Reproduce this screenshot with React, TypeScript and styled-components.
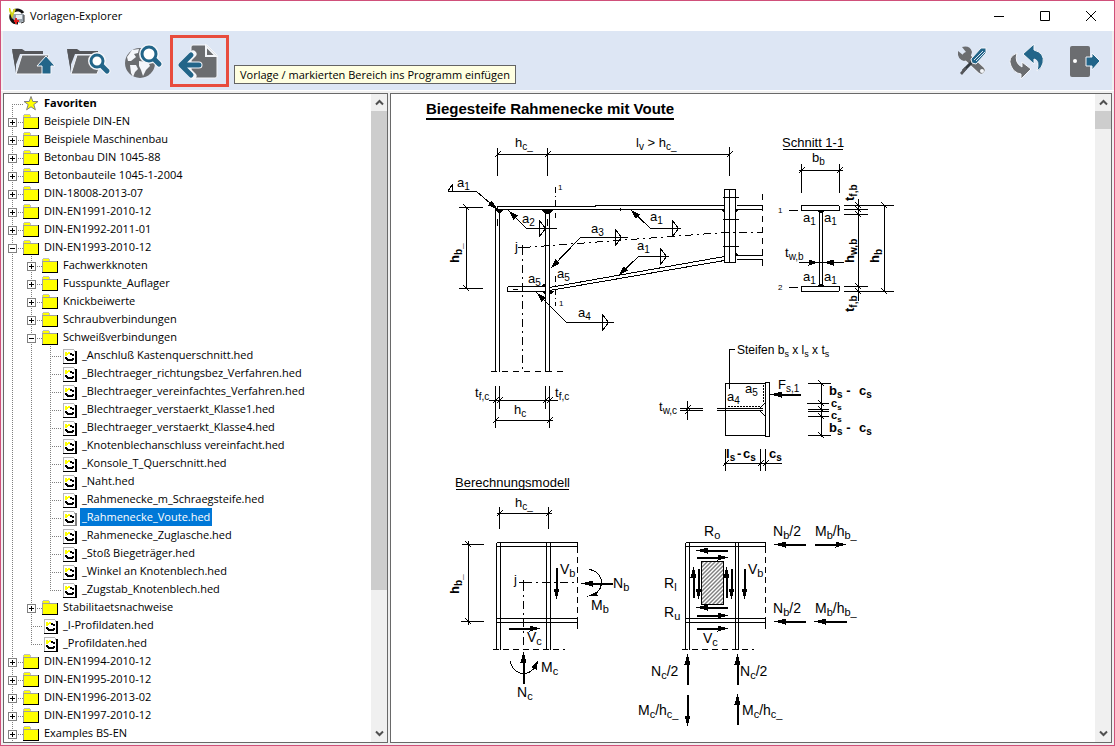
import React from "react";
import styled, { createGlobalStyle, css } from "styled-components";

const GlobalStyle = createGlobalStyle`
  *, *::before, *::after { box-sizing: border-box; }
  body { margin: 0; }
  button { border: 0; padding: 0; margin: 0; background: none; font: inherit; color: inherit; }
`;

const Window = styled.div`
  display: flex;
  flex-direction: column;
  height: 100vh;
  border: 1px solid #d0507a;
  background: #f0f0f0;
  color: #000;
  font: 11px/18px "Open Sans", "Noto Sans", sans-serif;
`;

const TitleBar = styled.header`
  display: flex;
  align-items: center;
  flex: none;
  height: 30px;
  padding-left: 8px;
  background: #fff;
`;

const AppTitle = styled.h1`
  flex: 1;
  margin: 0 0 0 5px;
  font-size: 11px;
  font-weight: 400;
  line-height: 18px;
`;

const CaptionButton = styled.button`
  display: grid;
  place-items: center;
  width: 46px;
  height: 30px;
`;

const Toolbar = styled.div`
  display: flex;
  flex: none;
  align-items: center;
  height: 59px;
  margin: 0 2px;
  padding-left: 2px;
  background: #dde6f4;
`;

const Spacer = styled.div`
  flex: 1;
`;

const ToolButton = styled.button<{ $marked?: boolean }>`
  position: relative;
  display: grid;
  place-items: center;
  width: ${(p) => (p.$marked ? 59 : 55)}px;
  height: 52px;
  ${(p) => p.$marked && css`border: 3px solid #e84c3d;`}
`;

const Tooltip = styled.span`
  position: absolute;
  left: 61px;
  top: 27px;
  z-index: 2;
  padding: 0 5px;
  border: 1px solid #646464;
  background: #ffffe1;
  line-height: 17px;
  white-space: nowrap;
`;

const Panes = styled.main`
  display: flex;
  flex: 1;
  gap: 2px;
  min-height: 0;
  padding: 2px 2px 2px;
  border-top: 1px solid #fff;
`;

const Pane = styled.section<{ $width?: number }>`
  display: flex;
  min-width: 0;
  flex: ${(p) => (p.$width ? `0 0 ${p.$width}px` : "1")};
  border: 1px solid #696969;
  background: #fff;
`;

const Scrolled = styled.div`
  flex: 1;
  min-width: 0;
  overflow: hidden;
`;

const Bar = styled.div`
  display: flex;
  flex-direction: column;
  flex: none;
  width: 16px;
  background: #f0f0f0;
`;

const BarButton = styled.button`
  display: grid;
  place-items: center;
  height: 17px;
`;

const BarTrack = styled.div`
  flex: 1;
`;

const BarThumb = styled.div<{ $share: number }>`
  height: ${(p) => p.$share}%;
  background: #cdcdcd;
`;

const Tree = styled.ul`
  margin: 0;
  padding: 0;
  list-style: none;
`;

const TreeRow = styled.li`
  display: flex;
  height: 18px;
`;

const dotsDown = "repeating-linear-gradient(to bottom, #808080 0 1px, transparent 1px 2px)";
const dotsAcross = "repeating-linear-gradient(to right, #808080 0 1px, transparent 1px 2px)";

const Guide = styled.span<{ $down: "none" | "full" | "top" | "bottom"; $across?: boolean }>`
  display: flex;
  flex: none;
  width: 19px;
  height: 18px;
  padding: 6px 0 0 4px;
  background-repeat: no-repeat;
  background-image: ${(p) => (p.$down === "none" ? "none" : dotsDown)}, ${(p) => (p.$across ? dotsAcross : "none")};
  background-position: 8px ${(p) => (p.$down === "bottom" ? 10 : 0)}px, 8px 10px;
  background-size: 1px ${(p) => (p.$down === "top" ? 10 : p.$down === "bottom" ? 8 : 18)}px, 11px 1px;
`;

const Expander = styled.button`
  display: block;
  width: 9px;
  height: 9px;
  background: #fff;
  svg { display: block; }
`;

const IconCell = styled.span<{ $file?: boolean }>`
  flex: none;
  width: 19px;
  padding: ${(p) => (p.$file ? "3px 0 0 2px" : "2px 0 0 0")};
  svg { display: block; }
`;

const Label = styled.span<{ $selected?: boolean; $bold?: boolean }>`
  padding: 0 2px;
  white-space: nowrap;
  font-weight: ${(p) => (p.$bold ? 700 : 400)};
  ${(p) => p.$selected && css`background: #0078d7; color: #fff;`}
`;

const Sheet = styled.article`
  padding: 5px 0 0 35px;
`;

const SheetTitle = styled.h2`
  width: max-content;
  margin: 0;
  border-bottom: 2px solid #000;
  font: 700 15px/19px "Liberation Sans", Arial, sans-serif;
`;

const Drawing = styled.svg`
  display: block;
  margin-top: 4px;
  font-family: "Liberation Sans", Arial, sans-serif;
`;

/* ---------- tree ---------- */

type Item = { text: string; level: number; kind: "star" | "folder" | "file"; open?: boolean; selected?: boolean; last?: boolean };
const folder = (text: string, level = 0, open = false): Item => ({ text, level, kind: "folder", open });
const file = (text: string, level = 2, extra: Partial<Item> = {}): Item => ({ text, level, kind: "file", ...extra });

const items: Item[] = [
  { text: "Favoriten", level: 0, kind: "star" },
  folder("Beispiele DIN-EN"),
  folder("Beispiele Maschinenbau"),
  folder("Betonbau DIN 1045-88"),
  folder("Betonbauteile 1045-1-2004"),
  folder("DIN-18008-2013-07"),
  folder("DIN-EN1991-2010-12"),
  folder("DIN-EN1992-2011-01"),
  folder("DIN-EN1993-2010-12", 0, true),
  folder("Fachwerkknoten", 1),
  folder("Fusspunkte_Auflager", 1),
  folder("Knickbeiwerte", 1),
  folder("Schraubverbindungen", 1),
  folder("Schweißverbindungen", 1, true),
  file("_Anschluß Kastenquerschnitt.hed"),
  file("_Blechtraeger_richtungsbez_Verfahren.hed"),
  file("_Blechtraeger_vereinfachtes_Verfahren.hed"),
  file("_Blechtraeger_verstaerkt_Klasse1.hed"),
  file("_Blechtraeger_verstaerkt_Klasse4.hed"),
  file("_Knotenblechanschluss vereinfacht.hed"),
  file("_Konsole_T_Querschnitt.hed"),
  file("_Naht.hed"),
  file("_Rahmenecke_m_Schraegsteife.hed"),
  file("_Rahmenecke_Voute.hed", 2, { selected: true }),
  file("_Rahmenecke_Zuglasche.hed"),
  file("_Stoß Biegeträger.hed"),
  file("_Winkel an Knotenblech.hed"),
  file("_Zugstab_Knotenblech.hed", 2, { last: true }),
  folder("Stabilitaetsnachweise", 1),
  file("_I-Profildaten.hed", 1),
  file("_Profildaten.hed", 1, { last: true }),
  folder("DIN-EN1994-2010-12"),
  folder("DIN-EN1995-2010-12"),
  folder("DIN-EN1996-2013-02"),
  folder("DIN-EN1997-2010-12"),
  folder("Examples BS-EN"),
];

const FolderIcon = () => (
  <svg width="16" height="15" shapeRendering="crispEdges" aria-hidden="true">
    <path d="M0 3V1H1V0H7V1H8V3Z" fill="#c0c0c0" />
    <path d="M1 3V1H7V3Z" fill="#ff0" />
    <path d="M0 3H16V15H0Z" fill="#000" />
    <path d="M0 3H15V14H0Z" fill="#a0a0a0" />
    <path d="M1 4H15V14H1Z" fill="#ff0" />
  </svg>
);

const FileIcon = ({ selected }: { selected?: boolean }) => (
  <svg width="14" height="15" shapeRendering="crispEdges" aria-hidden="true">
    <path d="M0 0H11V3H14V15H0Z" fill="#fff" />
    <path d="M0 0H11V1H1V14H0ZM11 1H12V3H11Z" fill="#b8b8b8" />
    <path d="M12 2H14V15H0V14H12Z" fill={selected ? "#808080" : "#000"} />
    <path d="M2 3H4V4H5V3H7V5H5V6H4V7H2Z" fill="#ff0" />
    <path d="M7 4H9V5H11V7H9V6H7ZM2 8H4V9H5V10H9V9H11V11H10V12H4V11H3V10H2Z" fill="#000" />
  </svg>
);

const StarIcon = () => (
  <svg width="16" height="15" aria-hidden="true">
    <path d="M8 0.5L9.8 5.5H15L10.8 8.6L12.4 13.8L8 10.8L3.6 13.8L5.2 8.6L1 5.5H6.2Z" fill="#ff0" stroke="#808080" />
  </svg>
);

const Row = ({ item, first }: { item: Item; first: boolean }) => {
  const cells: React.ReactNode[] = [];
  for (let i = 0; i < item.level; i++) cells.push(<Guide key={i} $down="full" />);
  return (
    <TreeRow role="treeitem" aria-level={item.level + 1} aria-selected={!!item.selected} aria-expanded={item.kind === "folder" ? !!item.open : undefined}>
      {cells}
      <Guide $down={first ? "bottom" : item.last ? "top" : "full"} $across>
        {item.kind === "folder" && (
          <Expander aria-label={item.open ? "Zuklappen" : "Aufklappen"}>
            <svg width="9" height="9" shapeRendering="crispEdges">
              <path d="M0 0H9V9H0ZM1 1V8H8V1Z" fillRule="evenodd" fill="#808080" />
              <path d={item.open ? "M2 4H7V5H2Z" : "M2 4H4V2H5V4H7V5H5V7H4V5H2Z"} />
            </svg>
          </Expander>
        )}
      </Guide>
      <IconCell $file={item.kind === "file"}>
        {item.kind === "star" ? <StarIcon /> : item.kind === "file" ? <FileIcon selected={item.selected} /> : <FolderIcon />}
      </IconCell>
      <Label $selected={item.selected} $bold={first}>{item.text}</Label>
    </TreeRow>
  );
};

/* ---------- scroll bar ---------- */

const Chevron = ({ up }: { up?: boolean }) => (
  <svg width="9" height="7" aria-hidden="true">
    <path d={up ? "M1 5.5L4.5 2L8 5.5" : "M1 1.5L4.5 5L8 1.5"} fill="none" stroke="#505050" strokeWidth="2" />
  </svg>
);

const ScrollBar = ({ share }: { share: number }) => (
  <Bar>
    <BarButton aria-label="Nach oben"><Chevron up /></BarButton>
    <BarTrack><BarThumb $share={share} /></BarTrack>
    <BarButton aria-label="Nach unten"><Chevron /></BarButton>
  </Bar>
);

/* ---------- drawing helpers ---------- */

type P = { x: number; y: number };
const head = (from: P, to: P, len: number, half: number) => {
  const d = Math.hypot(to.x - from.x, to.y - from.y);
  const ux = (to.x - from.x) / d;
  const uy = (to.y - from.y) / d;
  const bx = to.x - ux * len;
  const by = to.y - uy * len;
  return `M${to.x} ${to.y}L${bx - uy * half} ${by + ux * half}L${bx + uy * half} ${by - ux * half}Z`;
};

/* Force arrow with a heavy shaft */
const Force = ({ a }: { a: [number, number, number, number] }) => {
  const from = { x: a[0], y: a[1] };
  const to = { x: a[2], y: a[3] };
  return (
    <g>
      <path d={`M${a[0]} ${a[1]}L${a[2] - Math.sign(a[2] - a[0]) * 6} ${a[3] - Math.sign(a[3] - a[1]) * 6}`} strokeWidth="2" />
      <path d={head(from, to, 11, 3)} fill="#000" stroke="none" />
    </g>
  );
};

/* Weld call-out: tip, knee, end of the shelf and the fillet sign */
const Weld = ({ a, tri }: { a: number[]; tri?: number }) => (
  <g>
    <path d={`M${a[0]} ${a[1]}L${a[2]} ${a[3]}H${a[4]}`} />
    <path d={head({ x: a[2], y: a[3] }, { x: a[0], y: a[1] }, 10, 3)} fill="#000" stroke="none" />
    {tri !== undefined && <path d={`M${tri} ${a[3] - 8}V${a[3] + 8}L${tri + 6} ${a[3]}Z`} />}
  </g>
);

/* "M_b/h_b" style symbols: text in braces is lowered */
const Sym = ({ x, y, t, size = 14, bold, up }: { x: number; y: number; t: string; size?: number; bold?: boolean; up?: boolean }) => {
  const parts = t.split(/(\{[^}]*\})/).filter(Boolean);
  let low = false;
  return (
    <text x={x} y={y} fontSize={size} fontWeight={bold ? 700 : 400} transform={up ? `rotate(-90 ${x} ${y})` : undefined}>
      {parts.map((part, i) => {
        const sub = part[0] === "{";
        const dy = sub === low ? 0 : sub ? 3 : -3;
        low = sub;
        return (
          <tspan key={i} dy={dy} fontSize={sub ? size - 3 : size}>{sub ? part.slice(1, -1) : part}</tspan>
        );
      })}
    </text>
  );
};

const tick = (x: number, y: number) => `M${x - 3} ${y + 3}L${x + 3} ${y - 3}`;

const FrameCorner = () => (
  <g>
    <path d={"M497 147V175M547 147V175M729 146V175M497 154H729" + tick(497, 154) + tick(547, 154) + tick(729, 154)} />
    <path d={"M466 207V288M458 207H482M458 288H482M463 204L469 210M463 285L469 291"} />
    <path d="M495 209V371M499 209V371M545 209V371M549 209V371" />
    <path d="M497 209V206H595V205H723M495 209H723M736 205H762M736 209H762M736 255H762M736 259H762" />
    <path d="M724 189H735V262H724ZM729 189V262M722 197H738M722 219H738M722 246H738" />
    <path d="M549 287L724 256M549 290L724 260" />
    <path d="M507 286H545M507 291H545M507 286V291M512 289H517" />
    <path d="M495 209H503L499 213ZM541 209H553L549 213H545ZM545 286L541 286L545 283ZM549 291L553 291L549 294ZM545 291L542 291L545 294ZM723 209H721L723 211ZM736 209H738L736 211ZM736 255H738L736 253ZM619 209L620 208V210Z" fill="#000" />
    <path d="M490 371H562M762 193V268" strokeDasharray="6 5" />
    <path d="M522 246V371M523 247L724 232H762" strokeDasharray="8 4 2 4" />
    <path d="M517 247H524M522 244V250M497 218V225M547 218V225" />
    <path d="M555 186V217M555 275V305" strokeDasharray="6 3 1 3" />
    <Weld a={[497, 209, 476, 191, 447]} />
    <path d="M447 191L452 184V191" />
    <Weld a={[508, 210, 526, 228, 556]} tri={539} />
    <Weld a={[550, 268, 580, 237, 627]} tri={615} />
    <Weld a={[630, 209, 650, 228, 680]} tri={672} />
    <Weld a={[618, 275, 638, 256, 668]} tri={660} />
    <Weld a={[536, 292, 566, 322, 613]} tri={602} />
    <path d={"M495 385V427M549 385V427M499 385V408M545 385V408M488 400H557M494 420H552" + tick(495, 400) + tick(499, 400) + tick(545, 400) + tick(549, 400) + tick(495, 420) + tick(549, 420)} />
  </g>
);

const CrossSection = () => (
  <g>
    <path d={"M782 149H842M801 163V192M839 163V192M798 170H842" + tick(801, 170) + tick(839, 170)} />
    <path d="M801 205H838L839 206V210H801ZM801 286H839V290L838 291H801ZM819 210V286M822 210V286" />
    <path d="M788 210H797M788 287H797" />
    <path d="M818 210H824L822 212H819ZM818 286H824L822 284H819Z" fill="#000" />
    <path d="M798 262H843" />
    <path d="M818 262L808 259V265ZM823 262L833 259V265Z" fill="#000" stroke="none" />
    <path d="M843 205H893M843 291H893M843 209H867M843 214H867M843 286H867M858 198V300M884 205V291" />
    <path d="M855 202L861 208M855 206L861 212M855 211L861 217M855 283L861 289M855 288L861 294M881 202L887 208M881 288L887 294" />
  </g>
);

const StiffenerDetail = () => (
  <g>
    <path d="M734 349H729V388" />
    <path d="M765 383H725V435H765M765 382H769V436H765ZM716 408H762M716 410H762M759 408L765 402M759 410L765 416" />
    <path d="M727 406H760M763 384V402" strokeDasharray="2 1" />
    <path d="M679 408H702M679 410H702M687 400V419M684 411L690 405M684 414L690 408" />
    <Force a={[800, 394, 770, 394]} />
    <path d="M821 383V436M807 383H830M806 403H828M807 409H828M807 411H828M807 416H828M807 435H830" />
    <path d="M818 380L824 386M818 400L824 406M818 406L824 412M818 413L824 419M818 432L824 438" />
    <path d={"M725 448V470M760 448V470M765 448V470M723 463H781" + tick(725, 463) + tick(760, 463) + tick(765, 463)} />
  </g>
);

const ModelLeft = () => (
  <g>
    <path d={"M455 489H568M499 506V528M548 506V528M496 513H551" + tick(499, 513) + tick(548, 513)} />
    <path d="M468 540V624M461 544H483M460 621H483M465 541L471 547M465 618L471 624" />
    <path d="M496 542V649M500 542V649M546 542V649M550 542V649M496 542H577V546H496M496 618H577M496 622H577M577 542V546M577 618V622" />
    <path d="M577 546V618M577 622V630M492 649H564" strokeDasharray="6 4" />
    <path d="M523 582H577M523 582V649" strokeDasharray="8 4 2 4" />
    <path d="M518 582H528M523 579V586" />
    <Force a={[556, 567, 556, 599]} />
    <Force a={[612, 583, 581, 583]} />
    <Force a={[508, 628, 540, 628]} />
    <Force a={[523, 683, 523, 651]} />
    <path d="M588 569A13 13 0 0 1 593 594M510 660A13 13 0 0 0 535 665" fill="none" />
    <path d="M587 596L596 591L597 595ZM538 659L531 667L536 669Z" fill="#000" stroke="none" />
  </g>
);

const ModelRight = () => (
  <g>
    <path d="M685 542V649M689 542V649M735 542V649M738 542V649M685 542H765V546H685M685 618H765V622H685" />
    <path d="M765 546V618M765 622V630M681 649H753" strokeDasharray="6 4" />
    <rect x="701" y="561" width="22" height="43" fill="url(#hatch)" />
    <Force a={[727, 550, 696, 550]} />
    <Force a={[696, 557, 728, 557]} />
    <Force a={[727, 607, 696, 607]} />
    <Force a={[696, 615, 728, 615]} />
    <Force a={[696, 628, 728, 628]} />
    <Force a={[693, 597, 693, 566]} />
    <Force a={[698, 568, 698, 599]} />
    <Force a={[726, 597, 726, 566]} />
    <Force a={[731, 568, 731, 599]} />
    <Force a={[744, 568, 744, 599]} />
    <Force a={[805, 544, 774, 544]} />
    <Force a={[814, 544, 846, 544]} />
    <Force a={[805, 621, 774, 621]} />
    <Force a={[846, 621, 814, 621]} />
    <Force a={[687, 684, 687, 653]} />
    <Force a={[737, 684, 737, 653]} />
    <Force a={[687, 694, 687, 726]} />
    <Force a={[737, 724, 737, 693]} />
  </g>
);

const FrameDrawing = () => (
  <Drawing width="480" height="616" viewBox="426 124 480 616" role="img" aria-label="Biegesteife Rahmenecke mit Voute">
    <defs>
      <pattern id="hatch" width="4" height="4" patternUnits="userSpaceOnUse">
        <path d="M-1 5L5 -1M-1 1L1 -1M3 5L5 3" stroke="#000" />
      </pattern>
    </defs>
    <g transform="translate(0.5 0.5)" fill="none" stroke="#000" shapeRendering="crispEdges">
      <FrameCorner />
      <CrossSection />
      <StiffenerDetail />
      <ModelLeft />
      <ModelRight />
    </g>
    <g>
      <Sym x={515} y={147} t="h{c_}" size={13} />
      <Sym x={636} y={147} t="l{v} > h{c_}" size={13} />
      <Sym x={457} y={187} t="a{1}" size={13} />
      <Sym x={522} y={223} t="a{2}" size={13} />
      <Sym x={591} y={233} t="a{3}" size={13} />
      <Sym x={650} y={221} t="a{1}" size={13} />
      <Sym x={637} y={250} t="a{1}" size={13} />
      <Sym x={528} y={283} t="a{5}" size={13} />
      <Sym x={557} y={278} t="a{5}" size={13} />
      <Sym x={578} y={317} t="a{4}" size={13} />
      <Sym x={515} y={251} t="j" size={13} />
      <Sym x={558} y={190} t="1" size={8} />
      <Sym x={559} y={306} t="1" size={8} />
      <Sym x={459} y={263} t="h{b_}" size={13} bold up />
      <Sym x={475} y={397} t="t{f,c}" size={13} />
      <Sym x={555} y={397} t="t{f,c}" size={13} />
      <Sym x={514} y={414} t="h{c}" size={13} />
      <Sym x={782} y={147} t="Schnitt 1-1" size={13} />
      <Sym x={812} y={162} t="b{b}" size={13} />
      <Sym x={778} y={213} t="1" size={8} />
      <Sym x={778} y={290} t="2" size={8} />
      <Sym x={803} y={222} t="a{1}" size={13} />
      <Sym x={824} y={222} t="a{1}" size={13} />
      <Sym x={803} y={281} t="a{1}" size={13} />
      <Sym x={824} y={281} t="a{1}" size={13} />
      <Sym x={785} y={257} t="t{w,b}" size={13} />
      <Sym x={854} y={201} t="t{f,b}" size={13} bold up />
      <Sym x={854} y={263} t="h{w,b}" size={13} bold up />
      <Sym x={879} y={263} t="h{b}" size={13} bold up />
      <Sym x={854} y={312} t="t{f,b}" size={13} bold up />
      <Sym x={737} y={354} t="Steifen b{s} x l{s} x t{s}" size={12} />
      <Sym x={659} y={411} t="t{w,c}" size={13} />
      <Sym x={727} y={401} t="a{4}" size={13} />
      <Sym x={745} y={393} t="a{5}" size={13} />
      <Sym x={778} y={389} t="F{s,1}" size={13} />
      <Sym x={829} y={395} t="b{s} -" size={13} bold />
      <Sym x={859} y={395} t="c{s}" size={13} bold />
      <Sym x={831} y={407} t="c{s}" size={11} bold />
      <Sym x={831} y={419} t="c{s}" size={11} bold />
      <Sym x={829} y={432} t="b{s} -" size={13} bold />
      <Sym x={859} y={432} t="c{s}" size={13} bold />
      <Sym x={726} y={458} t="l{s}" size={13} bold />
      <Sym x={737} y={458} t="-" size={13} bold />
      <Sym x={743} y={458} t="c{s}" size={13} bold />
      <Sym x={769} y={458} t="c{s}" size={13} bold />
      <Sym x={455} y={487} t="Berechnungsmodell" size={13} />
      <Sym x={515} y={507} t="h{c_}" size={13} />
      <Sym x={459} y={594} t="h{b_}" size={13} bold up />
      <Sym x={514} y={584} t="j" size={13} />
      <Sym x={560} y={574} t="V{b}" />
      <Sym x={613} y={588} t="N{b}" />
      <Sym x={591} y={610} t="M{b}" />
      <Sym x={527} y={642} t="V{c}" />
      <Sym x={541} y={672} t="M{c}" />
      <Sym x={517} y={697} t="N{c}" />
      <Sym x={704} y={536} t="R{o}" />
      <Sym x={664} y={588} t="R{l}" />
      <Sym x={664} y={617} t="R{u}" />
      <Sym x={748} y={574} t="V{b}" />
      <Sym x={703} y={643} t="V{c}" />
      <Sym x={773} y={536} t="N{b}/2" />
      <Sym x={815} y={536} t="M{b}/h{b_}" />
      <Sym x={773} y={613} t="N{b}/2" />
      <Sym x={815} y={613} t="M{b}/h{b_}" />
      <Sym x={651} y={676} t="N{c}/2" />
      <Sym x={740} y={676} t="N{c}/2" />
      <Sym x={638} y={715} t="M{c}/h{c_}" />
      <Sym x={742} y={715} t="M{c}/h{c_}" />
    </g>
  </Drawing>
);

/* ---------- toolbar icons ---------- */

const G = "#6b6d70";
const B = "#226589";
const ToolSvg = ({ x, children }: { x: number; children: React.ReactNode }) => (
  <svg width="53" height="46" viewBox={`${x} 38 53 46`} aria-hidden="true">{children}</svg>
);

const FolderShape = ({ dx = 0 }: { dx?: number }) => (
  <g transform={`translate(${dx} 0)`}>
    <path d="M12 49H22L25 51H43V54H20L15 67L16 72Z" fill="#55565a" />
    <path d="M12 49L16 73V60Z" fill="#55565a" />
    <path d="M22 55H49L42 74H16Z" fill={G} stroke="#f4f6fa" />
  </g>
);

const Lens = ({ cx, cy, r = 7 }: { cx: number; cy: number; r?: number }) => (
  <g>
    <path d={`M${cx + 5} ${cy + 5}L${cx + 10} ${cy + 10}`} stroke="#f4f6fa" strokeWidth="7" strokeLinecap="round" />
    <circle cx={cx} cy={cy} r={r} fill="#dde6f4" stroke="#f4f6fa" strokeWidth="6" />
    <path d={`M${cx + 5} ${cy + 5}L${cx + 10} ${cy + 10}`} stroke={B} strokeWidth="5" strokeLinecap="round" />
    <circle cx={cx} cy={cy} r={r} fill="#fff" stroke={B} strokeWidth="3" />
  </g>
);

const App = () => (
  <Window>
    <GlobalStyle />
    <TitleBar>
      <svg width="16" height="17" viewBox="9 7 16 17" aria-hidden="true">
        <path d="M13 13H24V20L20 22L13 20Z" fill="#9aa4ad" />
        <path d="M16 14H22V18H16Z" fill="#e8edf2" />
        <path d="M12 12C9 17 12 22 18 22M14 10C17 8 21 9 23 12" fill="none" stroke="#111" strokeWidth="3" />
        <path d="M9 7L12 15L14 10L15 8" fill="none" stroke="#d4d61c" strokeWidth="2" />
        <path d="M24 14V21L21 22" fill="none" stroke="#333" />
        <path d="M16 17V23M14 20H19" stroke="#e02020" strokeWidth="2" />
      </svg>
      <AppTitle>Vorlagen-Explorer</AppTitle>
      <CaptionButton aria-label="Minimieren">
        <svg width="10" height="10"><path d="M0 5H10V6H0Z" /></svg>
      </CaptionButton>
      <CaptionButton aria-label="Maximieren">
        <svg width="10" height="10"><path d="M0.5 0.5H9.5V9.5H0.5Z" fill="none" stroke="#000" /></svg>
      </CaptionButton>
      <CaptionButton aria-label="Schließen">
        <svg width="10" height="10"><path d="M0 0L10 10M10 0L0 10" stroke="#000" /></svg>
      </CaptionButton>
    </TitleBar>

    <Toolbar role="toolbar">
      <ToolButton aria-label="Ordner nach oben">
        <ToolSvg x={6}>
          <FolderShape />
          <path d="M46 56L55 66H51V74H42V66H37Z" fill={B} stroke="#f4f6fa" />
        </ToolSvg>
      </ToolButton>
      <ToolButton aria-label="Ordner durchsuchen">
        <ToolSvg x={61}>
          <FolderShape dx={55} />
          <Lens cx={97} cy={61} r={6} />
        </ToolSvg>
      </ToolButton>
      <ToolButton aria-label="Im Internet suchen">
        <ToolSvg x={116}>
          <circle cx="140" cy="63" r="15" fill={G} />
          <path d="M127 57L132 50L139 49L138 53L134 54L136 57L131 61L128 61ZM130 65L136 65L138 69L135 72L133 77L131 73ZM139 61L148 62L150 66L146 70L143 76L141 70L139 66Z" fill="#f4f6fa" />
          <Lens cx={149} cy={54} r={7} />
        </ToolSvg>
      </ToolButton>
      <ToolButton $marked aria-label="Einfügen">
        <ToolSvg x={173}>
          <path d="M191 47Q191 45 193 45H207L217 55V76Q217 78 215 78H193Q191 78 191 76Z" fill={G} stroke="#f4f6fa" />
          <path d="M206 46V56H216Z" fill={G} stroke="#f4f6fa" strokeWidth="2" />
          <path d="M193 54L182 65L193 76M183 65H199" fill="none" stroke="#f4f6fa" strokeWidth="7" strokeLinejoin="round" strokeLinecap="round" />
          <path d="M191 55L181 65L191 75M182 65H199" fill="none" stroke={B} strokeWidth="5" strokeLinejoin="round" strokeLinecap="round" />
        </ToolSvg>
        <Tooltip role="tooltip">Vorlage / markierten Bereich ins Programm einfügen</Tooltip>
      </ToolButton>
      <Spacer />
      <ToolButton aria-label="Einstellungen">
        <ToolSvg x={948}>
          <path d="M967 57L981 70" stroke="#f4f6fa" strokeWidth="8" strokeLinecap="round" />
          <path d="M966 56L981 70" stroke={G} strokeWidth="7" strokeLinecap="round" />
          <path d="M958 51L963 55L966 52L962 47Q970 45 972 52L970 59L964 61Q957 59 958 51Z" fill={G} />
          <circle cx="982" cy="71" r="2" fill="#f4f6fa" />
          <path d="M973 61L963 71" stroke="#333a40" strokeWidth="3" />
          <path d="M965 67L967 69L962 75L960 73Z" fill="#55565a" />
          <path d="M971 59L981 48L986 48L986 53L976 64L972 63Z" fill={B} stroke="#f4f6fa" />
          <path d="M974 60L983 51M976 61L985 52" stroke="#dde6f4" />
        </ToolSvg>
      </ToolButton>
      <ToolButton aria-label="Aktualisieren">
        <ToolSvg x={1003}>
          <path d="M1017 53Q1007 57 1011 66Q1014 73 1021 74V79L1031 69L1022 62V67Q1014 63 1017 53Z" fill={G} stroke="#f4f6fa" />
          <path d="M1023 54L1034 44V50Q1045 53 1043 63Q1042 68 1037 71Q1040 60 1034 59V64Z" fill={B} stroke="#f4f6fa" />
        </ToolSvg>
      </ToolButton>
      <ToolButton aria-label="Beenden">
        <ToolSvg x={1058}>
          <rect x="1070" y="46" width="20" height="31" rx="2" fill={G} />
          <circle cx="1075" cy="61" r="2" fill="#fff" />
          <path d="M1086 57H1092V53L1100 61L1092 70V66H1086Z" fill={B} stroke="#f4f6fa" />
        </ToolSvg>
      </ToolButton>
    </Toolbar>

    <Panes>
      <Pane $width={385}>
        <Scrolled>
          <Tree role="tree" aria-label="Vorlagen">
            {items.map((item, i) => <Row key={item.text} item={item} first={i === 0} />)}
          </Tree>
        </Scrolled>
        <ScrollBar share={78} />
      </Pane>
      <Pane>
        <Scrolled>
          <Sheet>
            <SheetTitle>Biegesteife Rahmenecke mit Voute</SheetTitle>
            <FrameDrawing />
          </Sheet>
        </Scrolled>
        <ScrollBar share={3} />
      </Pane>
    </Panes>
  </Window>
);

export default App;
